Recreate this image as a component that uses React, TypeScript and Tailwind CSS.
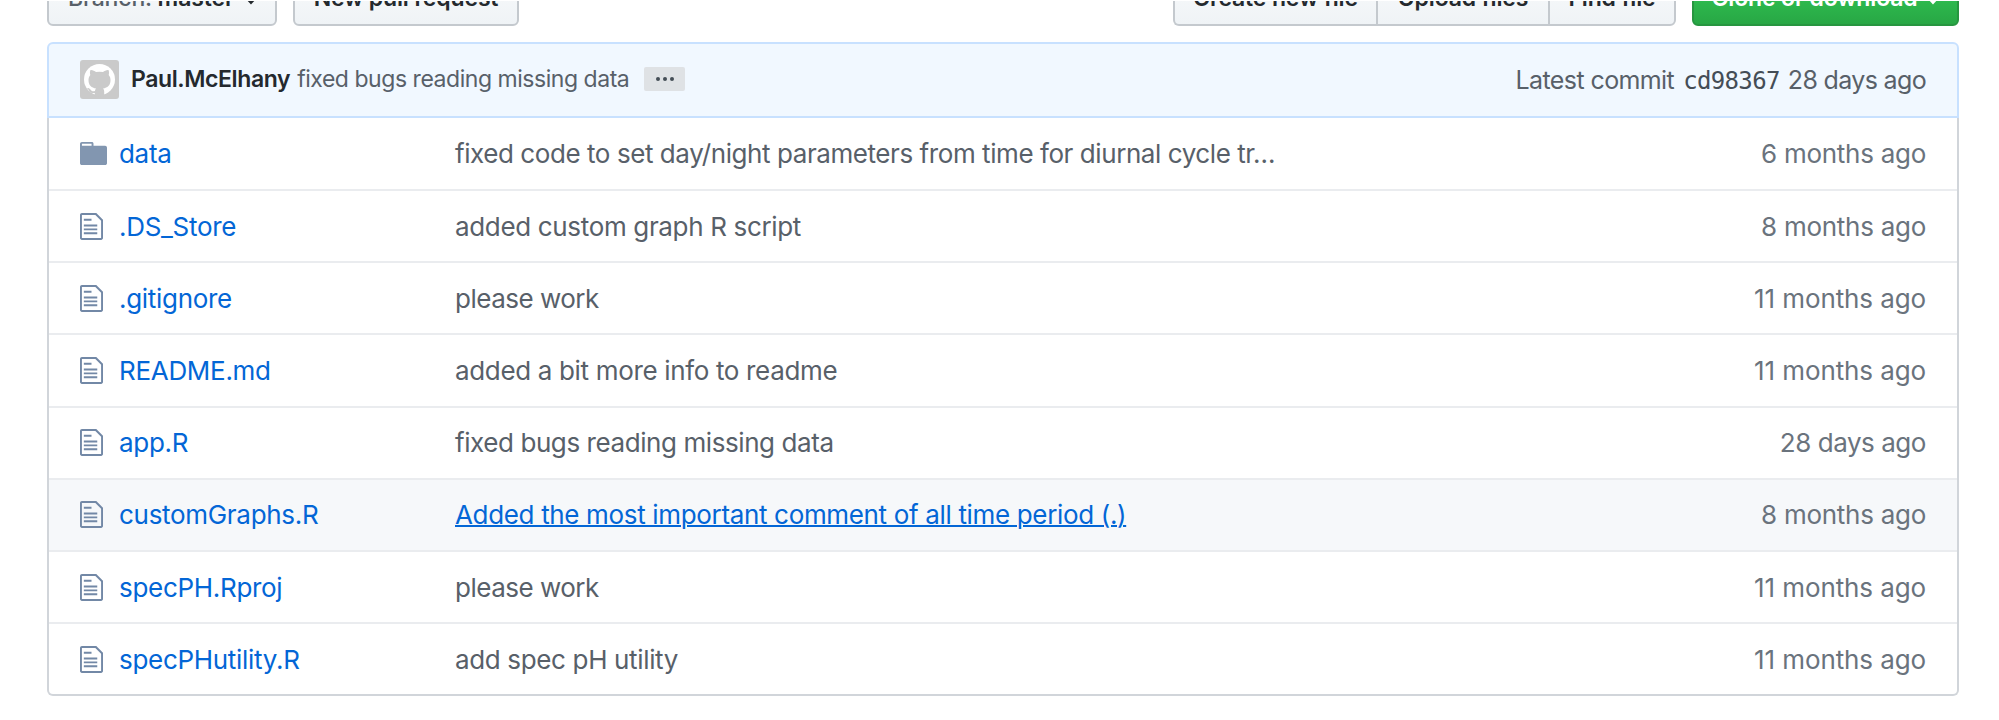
import React from "react";

type Entry = { name: string; msg: string; age: string; msgCls: string; ageCls: string; dir?: boolean; hover?: boolean };

const entries: Entry[] = [
  { name: "data", msg: "fixed code to set day/night parameters from time for diurnal cycle tr…", age: "6 months ago", msgCls: "tracking-[-0.43px]", ageCls: "tracking-[-0.27px]", dir: true },
  { name: ".DS_Store", msg: "added custom graph R script", age: "8 months ago", msgCls: "tracking-[-0.34px]", ageCls: "tracking-[-0.27px]" },
  { name: ".gitignore", msg: "please work", age: "11 months ago", msgCls: "tracking-[-0.5px]", ageCls: "tracking-[-0.1px]" },
  { name: "README.md", msg: "added a bit more info to readme", age: "11 months ago", msgCls: "tracking-[-0.34px]", ageCls: "tracking-[-0.1px]" },
  { name: "app.R", msg: "fixed bugs reading missing data", age: "28 days ago", msgCls: "tracking-[-0.42px]", ageCls: "tracking-[-0.45px]" },
  { name: "customGraphs.R", msg: "Added the most important comment of all time period (.)", age: "8 months ago", msgCls: "tracking-[-0.34px]", ageCls: "tracking-[-0.27px]", hover: true },
  { name: "specPH.Rproj", msg: "please work", age: "11 months ago", msgCls: "tracking-[-0.5px]", ageCls: "tracking-[-0.1px]" },
  { name: "specPHutility.R", msg: "add spec pH utility", age: "11 months ago", msgCls: "tracking-[-0.35px]", ageCls: "tracking-[-0.1px]" },
];

const FolderIcon = () => (
  <svg width="27" height="31" viewBox="0 0 14 16" fill="#8296b0" className="shrink-0">
    <path fillRule="evenodd" d="M13 4H7V3c0-.66-.31-1-1-1H1c-.55 0-1 .45-1 1v10c0 .55.45 1 1 1h12c.55 0 1-.45 1-1V5c0-.55-.45-1-1-1zM6 4H1V3h5v1z" />
  </svg>
);

const FileIcon = () => (
  <svg width="23" height="31" viewBox="0 0 12 16" fill="#7288a6" className="shrink-0">
    <path fillRule="evenodd" d="M6 5H2V4h4v1zM2 8h7V7H2v1zm0 2h7V9H2v1zm0 2h7v-1H2v1zm10-7.5V14c0 .55-.45 1-1 1H1c-.55 0-1-.45-1-1V2c0-.55.45-1 1-1h7.5L12 4.5zM11 5L8 2H1v12h10V5z" />
  </svg>
);

const Caret = ({ className }: { className: string }) => (
  <svg width="14" height="13" viewBox="0 0 14 13" fill="currentColor" className={className}>
    <path d="M0 5h14L7 12.500z" />
  </svg>
);

const btn = "h-[58px] border-2 border-[#c4c9ce] bg-linear-to-b from-[#fafbfc] to-[#eff3f6] flex items-center justify-center pt-[3px] text-[23px] tracking-[-0.15px] font-semibold text-[#24292e] whitespace-nowrap";

export default function App() {
  return (
    <div className="h-[720px] w-[1999px] overflow-hidden bg-white pl-[47px] pr-10 pt-px font-['Inter',sans-serif] text-[#586069]">
      <div className="flex h-[25px] items-end justify-between overflow-hidden">
        <div className="flex gap-4">
          <div className={`${btn} w-[230px] rounded-md pl-[2px]`}><span className="font-medium text-[#586069]">Branch:</span>&nbsp;master<Caret className="ml-[10px]" /></div>
          <div className={`${btn} w-[226px] rounded-md`}>New pull request</div>
        </div>
        <div className="flex">
          <div className={`${btn} w-[203px] rounded-l-md border-r-0`}>Create new file</div>
          <div className={`${btn} w-[172px] border-r-0`}>Upload files</div>
          <div className={`${btn} w-[128px] rounded-r-md`}>Find file</div>
          <div className="ml-4 flex h-[58px] w-[267px] items-center justify-center rounded-md border-2 border-[#279640] bg-linear-to-b from-[#34d058] to-[#28a745] pt-[3px] text-[23px] font-semibold tracking-[-0.15px] whitespace-nowrap text-white">Clone or download<Caret className="ml-2" /></div>
        </div>
      </div>
      <div className="mt-4 flex h-[76px] w-[1912px] items-center rounded-t-md border-2 border-[#c8e1ff] bg-[#f1f8ff] px-[31px]">
        <div className="flex items-center pb-[2px] text-[23px]">
          <svg width="39" height="39" viewBox="0 0 39 39" className="shrink-0">
            <rect width="39" height="39" rx="3" fill="#cacaca" />
            <circle cx="19.5" cy="19.5" r="15.5" fill="#fff" />
            <path fill="#cacaca" d="M10.500 10c2-.3 4 1 5.500 2a20 20 0 0 1 7 0c1.500-1 3.500-2.300 5.500-2 .7 1.600.6 3.400.2 5 1.300 1.500 1.800 3.100 1.800 5 0 5.500-3 7.700-7.500 8.500 1 1 1.200 2 1.200 3.500v4a16 16 0 0 1-9.400 0v-3c-3.500.5-5-.8-6-2.800-.5-1-1.200-1.600-1.800-2 2-.7 3 .7 3.800 1.800 1 1.300 2.200 1.600 4.100 1.100.2-1.100.6-2 1.200-2.600-4.500-.8-7.600-3-7.600-8.500 0-1.900.6-3.500 1.800-5-.5-1.600-.5-3.400.2-5z" />
          </svg>
          <span className="ml-3 font-semibold tracking-[-0.4px] text-[#24292e]">Paul.McElhany</span>
          <span className="ml-[7px] tracking-[-0.46px]">fixed bugs reading missing data</span>
          <span className="ml-[15px] flex h-6 w-[41px] items-center justify-center gap-[3px] rounded-xs bg-[#dfe2e5]"><i className="size-1 rounded-full bg-[#444d56]" /><i className="size-1 rounded-full bg-[#444d56]" /><i className="size-1 rounded-full bg-[#444d56]" /></span>
        </div>
        <div className="ml-auto flex items-baseline pt-[2px] text-[25px]">
          <span className="tracking-[-0.6px]">Latest commit</span>
          <span className="ml-[9px] font-['DejaVu_Sans_Mono',monospace] text-[24px] tracking-[-0.65px] text-[#444d56]">cd98367</span>
          <span className="ml-2 tracking-[-0.65px]">28 days ago</span>
        </div>
      </div>
      <div className="h-[578px] w-[1912px] overflow-hidden rounded-b-md border-2 border-t-0 border-[#d1d5da] text-[26px]">
        {entries.map((e, i) => (
          <div key={e.name} className={`flex items-center px-[31px] ${i ? "h-[72.2px] border-t-2 border-[#eaecef]" : "h-[71px]"} ${e.hover ? "bg-[#f6f8fa]" : ""}`}>
            <div className="flex w-[27px]">{e.dir ? <FolderIcon /> : <FileIcon />}</div>
            <span className="ml-3 w-[336px] tracking-[-0.3px] whitespace-nowrap text-[#0366d6]">{e.name}</span>
            <span className={`whitespace-nowrap ${e.msgCls} ${e.hover ? "text-[#0366d6] underline decoration-2" : ""}`}>{e.msg}</span>
            <span className={`ml-auto whitespace-nowrap text-[#6a737d] ${e.ageCls}`}>{e.age}</span>
          </div>
        ))}
      </div>
    </div>
  );
}
